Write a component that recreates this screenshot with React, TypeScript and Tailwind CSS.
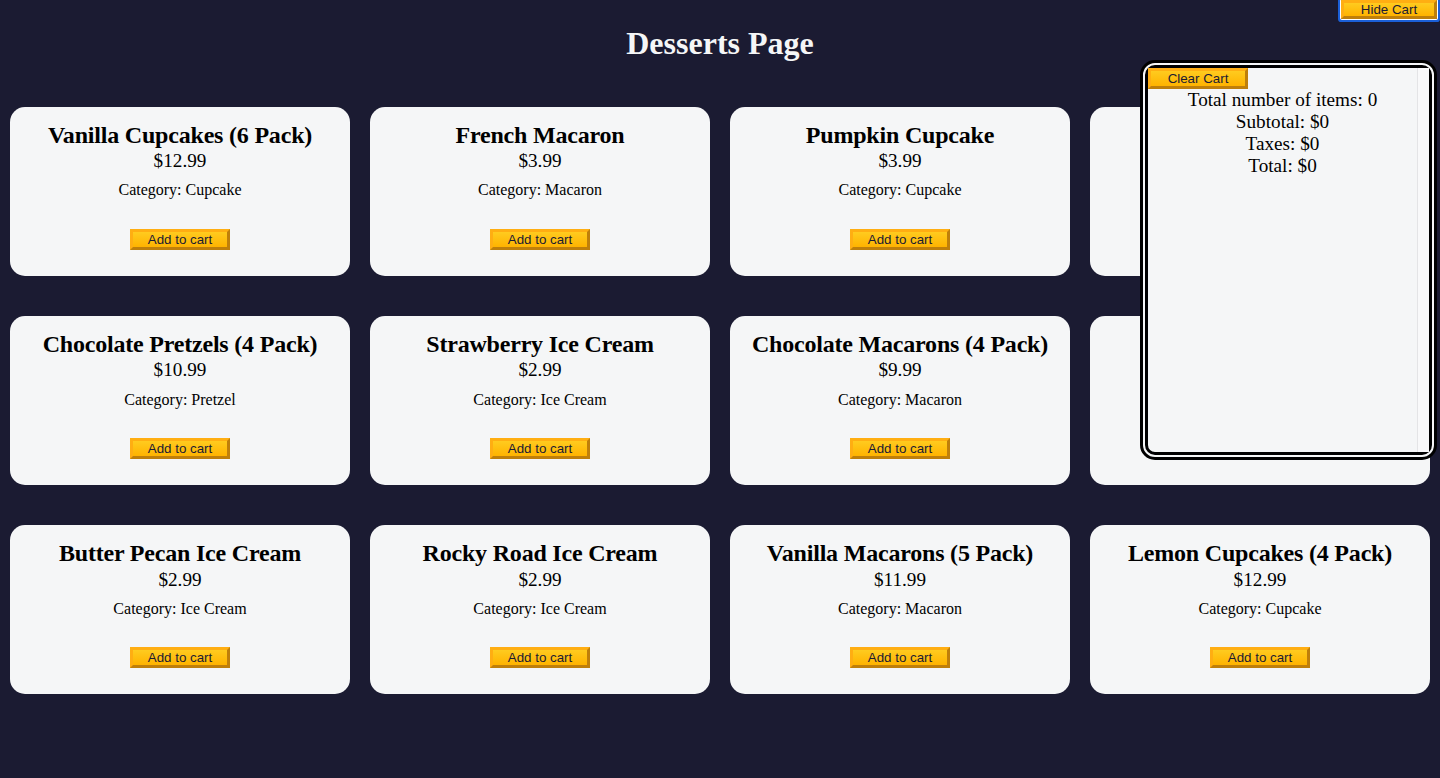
import { useState } from "react";

type Dessert = {
  id: number;
  name: string;
  price: number;
  category: string;
};

const PRODUCTS: Dessert[] = [
  { id: 1, name: "Vanilla Cupcakes (6 Pack)", price: 12.99, category: "Cupcake" },
  { id: 2, name: "French Macaron", price: 3.99, category: "Macaron" },
  { id: 3, name: "Pumpkin Cupcake", price: 3.99, category: "Cupcake" },
  { id: 4, name: "Chocolate Cupcake", price: 5.99, category: "Cupcake" },
  { id: 5, name: "Chocolate Pretzels (4 Pack)", price: 10.99, category: "Pretzel" },
  { id: 6, name: "Strawberry Ice Cream", price: 2.99, category: "Ice Cream" },
  { id: 7, name: "Chocolate Macarons (4 Pack)", price: 9.99, category: "Macaron" },
  { id: 8, name: "Strawberry Pretzel", price: 4.99, category: "Pretzel" },
  { id: 9, name: "Butter Pecan Ice Cream", price: 2.99, category: "Ice Cream" },
  { id: 10, name: "Rocky Road Ice Cream", price: 2.99, category: "Ice Cream" },
  { id: 11, name: "Vanilla Macarons (5 Pack)", price: 11.99, category: "Macaron" },
  { id: 12, name: "Lemon Cupcakes (4 Pack)", price: 12.99, category: "Cupcake" },
];

const btn =
  "block h-[21px] w-[100px] cursor-pointer border-[3px] border-t-[#ffae12] border-l-[#ffae12] border-b-[#bf7f0a] border-r-[#bf7f0a] bg-[linear-gradient(#ffcb1f,#ffb300)] px-[6px] text-[13.33px] leading-none text-[#1b1b32] font-['Liberation_Sans',Arial,sans-serif] hover:bg-[linear-gradient(#ffcc4c,#f89808)]";

export default function App() {
  const [cart, setCart] = useState<Dessert[]>([]);
  const [showCart, setShowCart] = useState(true);

  const subtotal = cart.reduce((sum, item) => sum + item.price, 0);
  const taxes = Number((subtotal * 0.0825).toFixed(2));
  const total = Number((subtotal + taxes).toFixed(2));

  return (
    <div className="relative min-h-screen bg-[#1b1b32] pt-[25px] font-['Liberation_Serif','Times_New_Roman',serif]">
      <button
        type="button"
        onClick={() => setShowCart((v) => !v)}
        className={btn + " absolute right-[3px] top-0 z-10 !h-[19px] !w-[96px] rounded-[1px] shadow-[0_0_0_1px_#fff,0_0_0_3px_#1b5fd6]"}
      >
        {showCart ? "Hide" : "Show"} Cart
      </button>

      <h1 className="mb-[25px] text-center text-[32px] font-bold leading-[1.15] text-[#f5f6f7]">
        Desserts Page
      </h1>

      <main className="flex flex-row flex-wrap justify-evenly">
        {PRODUCTS.map((p) => (
          <div
            key={p.id}
            className="mx-[10px] my-[20px] flex-[1_0_21%] rounded-[15px] bg-[#f5f6f7] px-[10px] pb-[26px] pt-[15px] text-center text-black"
          >
            <h2 className="whitespace-nowrap text-[24px] font-bold leading-[1.15] tracking-[-0.2px]">{p.name}</h2>
            <p className="mt-[1px] text-[19.2px] leading-[1.15]">${p.price}</p>
            <p className="mt-[9px] text-[16px] leading-[1.15]">Category: {p.category}</p>
            <button
              type="button"
              onClick={() => setCart((c) => [...c, p])}
              className={btn + " mx-auto mt-[29px]"}
            >
              Add to cart
            </button>
          </div>
        ))}
      </main>

      {showCart && (
        <div className="absolute right-[3px] top-[60px] flex h-[400px] w-[297px] rounded-[15px] border-[8px] border-double border-black bg-[#f5f6f7] text-center text-[19.2px] leading-[1.15] text-black">
          <div className="flex-1">
            <button type="button" onClick={() => setCart([])} className={btn}>
              Clear Cart
            </button>
            <p>Total number of items: {cart.length}</p>
            <p>Subtotal: ${Number(subtotal.toFixed(2))}</p>
            <p>Taxes: ${taxes}</p>
            <p>Total: ${total}</p>
          </div>
          <div className="w-[12px] border-l border-[#e4e4e6] bg-[#f9f9fa]" />
        </div>
      )}
    </div>
  );
}
